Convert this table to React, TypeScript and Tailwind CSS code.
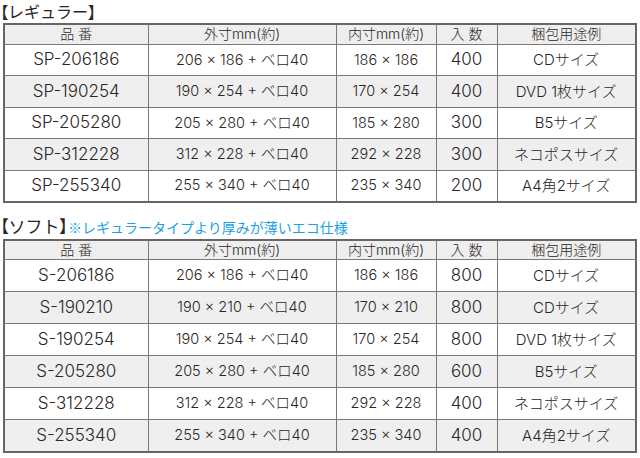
import React from "react";

type Row = [string, string, string, string, string];

const regular: Row[] = [
  ["SP-206186", "206 × 186 + ベロ40", "186 × 186", "400", "CDサイズ"],
  ["SP-190254", "190 × 254 + ベロ40", "170 × 254", "400", "DVD 1枚サイズ"],
  ["SP-205280", "205 × 280 + ベロ40", "185 × 280", "300", "B5サイズ"],
  ["SP-312228", "312 × 228 + ベロ40", "292 × 228", "300", "ネコポスサイズ"],
  ["SP-255340", "255 × 340 + ベロ40", "235 × 340", "200", "A4角2サイズ"],
];

const soft: Row[] = [
  ["S-206186", "206 × 186 + ベロ40", "186 × 186", "800", "CDサイズ"],
  ["S-190210", "190 × 210 + ベロ40", "170 × 210", "800", "CDサイズ"],
  ["S-190254", "190 × 254 + ベロ40", "170 × 254", "800", "DVD 1枚サイズ"],
  ["S-205280", "205 × 280 + ベロ40", "185 × 280", "600", "B5サイズ"],
  ["S-312228", "312 × 228 + ベロ40", "292 × 228", "400", "ネコポスサイズ"],
  ["S-255340", "255 × 340 + ベロ40", "235 × 340", "400", "A4角2サイズ"],
];

function Table({ rows, rowH }: { rows: Row[]; rowH: string }) {
  return (
    <table className="ml-[3px] w-[632px] table-fixed border-collapse border-2 border-[#6a6464] text-[#2a2626] font-light">
      <colgroup>
        <col className="w-[144px]" />
        <col className="w-[188px]" />
        <col className="w-[100px]" />
        <col className="w-[61px]" />
        <col className="w-[139px]" />
      </colgroup>
      <thead>
        <tr className="h-[20px] bg-[#eeeeee] text-[14px] leading-none">
          <th className="border border-[#7d7777] font-light">品 番</th>
          <th className="border border-[#7d7777] font-light">外寸mm(約)</th>
          <th className="border border-[#7d7777] font-light">内寸mm(約)</th>
          <th className="border border-[#7d7777] font-light">入 数</th>
          <th className="border border-[#7d7777] font-light">梱包用途例</th>
        </tr>
      </thead>
      <tbody>
        {rows.map((r, i) => (
          <tr key={r[0]} className={`${rowH} ${i % 2 === 1 ? "bg-[#efefef]" : "bg-white"}`}>
            <td className="border border-[#7d7777] text-center text-[17px] leading-none">{r[0]}</td>
            <td className="border border-[#7d7777] text-center text-[14.5px] leading-none">{r[1]}</td>
            <td className="border border-[#7d7777] text-center text-[14.5px] leading-none">{r[2]}</td>
            <td className="border border-[#7d7777] text-center text-[17px] leading-none">{r[3]}</td>
            <td className="border border-[#7d7777] text-center text-[15px] leading-none">{r[4]}</td>
          </tr>
        ))}
      </tbody>
    </table>
  );
}

function Br({ c }: { c: string }) {
  return <span className="[font-feature-settings:'palt']">{c}</span>;
}

export default function App() {
  return (
    <div
      className="w-[640px] h-[458px] bg-white overflow-hidden"
      style={{ fontFamily: 'Inter, "Noto Sans CJK JP", "Noto Sans", sans-serif' }}
    >
      <div className="h-[23px] flex items-center text-[16px] leading-[22px] text-[#2a2626]">
        <Br c="【" />
        レギュラー
        <Br c="】" />
      </div>
      <Table rows={regular} rowH="h-[31.5px]" />
      <div className="mt-[13px] h-[23px] flex items-center text-[17px] leading-[22px] text-[#2a2626]">
        <Br c="【" />
        ソフト
        <Br c="】" />
        <span className="text-[14px] font-normal text-[#1d9fe0] [font-family:'Noto_Sans_CJK_JP',sans-serif]">
          ※レギュラータイプより厚みが薄いエコ仕様
        </span>
      </div>
      <Table rows={soft} rowH="h-[32px]" />
    </div>
  );
}
